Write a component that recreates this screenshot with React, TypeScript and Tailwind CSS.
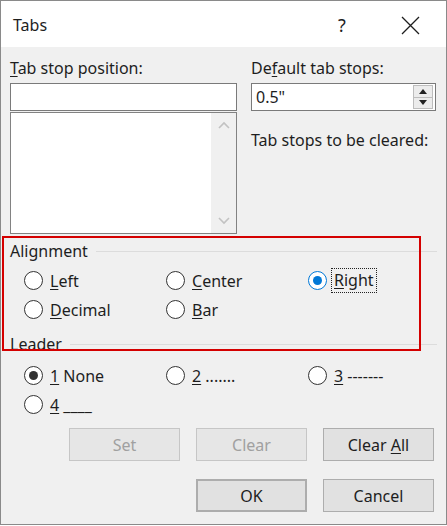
import React from 'react';

const font = { fontFamily: '"Noto Sans", "Open Sans", sans-serif' };

function U({ children }: { children: React.ReactNode }) {
  return <span className="underline underline-offset-2 decoration-1">{children}</span>;
}

function Radio({ checked, blue, children, focus }: { checked?: boolean; blue?: boolean; focus?: boolean; children: React.ReactNode }) {
  const ring = blue ? 'border-[#0078d7]' : 'border-[#333333]';
  const dot = blue ? 'bg-[#0078d7]' : 'bg-[#333333]';
  return (
    <div className="flex h-[29px] items-center gap-[7px]">
      <span className={`flex h-[19px] w-[19px] shrink-0 items-center justify-center rounded-full border-[1.5px] bg-white ${ring}`}>
        {checked && <span className={`h-[9px] w-[9px] rounded-full ${dot}`} />}
      </span>
      <span className={focus ? '-ml-[3px] border border-dotted border-[#222] px-[2px] leading-[23px]' : ''}>{children}</span>
    </div>
  );
}

function GroupLabel({ label }: { label: React.ReactNode }) {
  return (
    <div className="flex h-[26px] items-center gap-2">
      <span>{label}</span>
      <span className="flex-1 border-t border-[#dcdcdc]" />
    </div>
  );
}

function Btn({ children, disabled, primary }: { children: React.ReactNode; disabled?: boolean; primary?: boolean }) {
  return (
    <div
      className={`flex h-[33px] w-[111px] items-center justify-center ${
        primary ? 'border-2 border-[#0078d7]' : 'border'
      } ${disabled ? 'border-[#c6c6c6] bg-[#e6e6e6] text-[#a0a0a0]' : 'border-[#adadad] bg-[#e1e1e1] text-[#1e1e1e]'}`}
    >
      <span>{children}</span>
    </div>
  );
}

export default function App() {
  return (
    <div className="relative h-[526px] w-[447px] overflow-hidden bg-white text-[16px] text-[#1e1e1e]" style={font}>
      <div className="flex h-[525px] w-[447px] flex-col border border-[#8a8a8a] bg-[#f0f0f0]">
        {/* Title bar */}
        <div className="flex h-[46px] items-center bg-white pl-[12px] pt-[2px]">
          <span className="text-[16px]">Tabs</span>
          <span className="ml-auto w-[30px] text-center text-[18px]">?</span>
          <span className="ml-[41px] mr-[24px] flex w-[24px] justify-center">
            <svg width="19" height="19" viewBox="0 0 19 19">
              <path d="M1 1 L18 18 M18 1 L1 18" stroke="#1e1e1e" strokeWidth="1.3" />
            </svg>
          </span>
        </div>

        <div className="flex flex-col px-[9px]">
          {/* Top section */}
          <div className="mt-[10px] flex gap-[14px]">
            <div className="flex w-[227px] flex-col">
              <div className="h-[26px] leading-[22px]"><U>T</U>ab stop position:</div>
              <div className="h-[28px] border border-[#7a7a7a] bg-white" />
              <div className="mt-[1px] flex h-[122px] border border-[#828282] bg-white">
                <div className="flex-1" />
                <div className="flex w-[25px] flex-col items-center justify-between bg-[#f0f0f0] py-[8px]">
                  <svg width="12" height="8" viewBox="0 0 12 8"><path d="M1 7 L6 2 L11 7" stroke="#c2c2c2" strokeWidth="1.6" fill="none" /></svg>
                  <svg width="12" height="8" viewBox="0 0 12 8"><path d="M1 1 L6 6 L11 1" stroke="#c2c2c2" strokeWidth="1.6" fill="none" /></svg>
                </div>
              </div>
            </div>
            <div className="flex w-[185px] flex-col">
              <div className="h-[26px] leading-[22px]">De<U>f</U>ault tab stops:</div>
              <div className="flex h-[28px] items-center border border-[#7a7a7a] bg-white pl-[4px]">
                <span className="flex-1">0.5"</span>
                <div className="mr-[2px] flex h-[24px] w-[20px] flex-col border border-[#bdbdbd] bg-[#ececec]">
                  <div className="flex flex-1 items-center justify-center border-b border-[#bdbdbd]">
                    <svg width="8" height="5" viewBox="0 0 8 5"><path d="M0 5 L4 0 L8 5 Z" fill="#222" /></svg>
                  </div>
                  <div className="flex flex-1 items-center justify-center">
                    <svg width="8" height="5" viewBox="0 0 8 5"><path d="M0 0 L4 5 L8 0 Z" fill="#222" /></svg>
                  </div>
                </div>
              </div>
              <div className="mt-[17px] whitespace-nowrap">Tab stops to be cleared:</div>
            </div>
          </div>

          {/* Alignment */}
          <div className="mt-[4px]">
            <GroupLabel label="Alignment" />
            <div className="grid grid-cols-[142px_142px_1fr] pl-[14px] pt-[2px]">
              <Radio><U>L</U>eft</Radio>
              <Radio><U>C</U>enter</Radio>
              <Radio checked blue focus><U>R</U>ight</Radio>
              <Radio><U>D</U>ecimal</Radio>
              <Radio><U>B</U>ar</Radio>
            </div>
          </div>

          {/* Leader */}
          <div className="mt-[7px]">
            <GroupLabel label="Leader" />
            <div className="grid grid-cols-[142px_142px_1fr] pl-[14px] pt-[4px]">
              <Radio checked><U>1</U> None</Radio>
              <Radio><U>2</U> .......</Radio>
              <Radio><U>3</U> -------</Radio>
              <Radio><U>4</U> ____</Radio>
            </div>
          </div>

          {/* Buttons */}
          <div className="mt-[9px] flex justify-end gap-[16px] pr-[3px]">
            <Btn disabled>Set</Btn>
            <Btn disabled>Clear</Btn>
            <Btn>Clear <U>A</U>ll</Btn>
          </div>
          <div className="mt-[18px] flex justify-end gap-[16px] pr-[3px]">
            <Btn primary>OK</Btn>
            <Btn>Cancel</Btn>
          </div>
        </div>
      </div>

      {/* red highlight overlay */}
      <div className="pointer-events-none absolute left-[2px] top-[236px] h-[115px] w-[419px] border-2 border-[#d40000]" />
    </div>
  );
}
